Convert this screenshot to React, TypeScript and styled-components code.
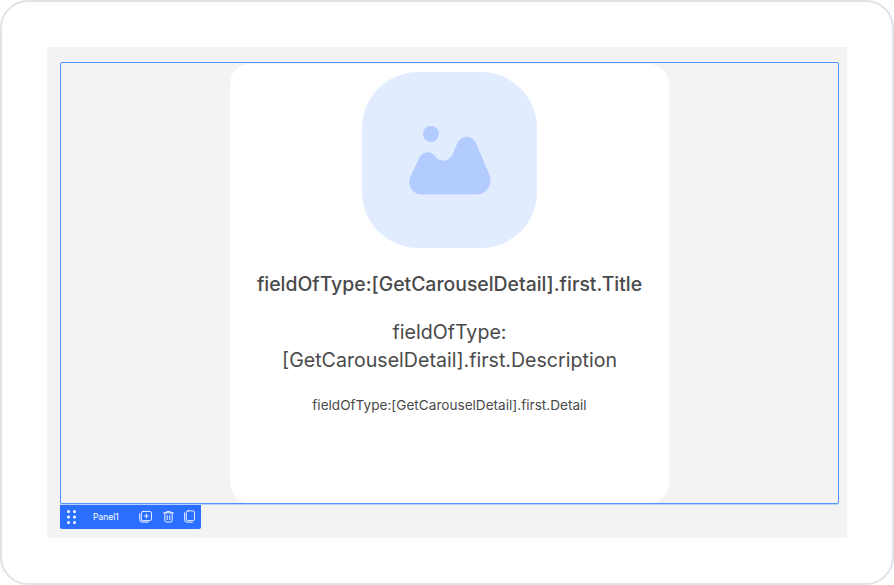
import React from "react";
import styled, { createGlobalStyle } from "styled-components";

const GlobalStyle = createGlobalStyle`
  html, body {
    margin: 0;
    padding: 0;
    background: #ffffff;
  }
  * {
    box-sizing: border-box;
  }
`;

const Frame = styled.div`
  width: 894px;
  height: 585px;
  padding: 45px 46px 45px 45px;
  background: #ffffff;
  border: 2px solid #e0e3e8;
  border-radius: 28px;
  font-family: Inter, "Liberation Sans", sans-serif;
`;

const Canvas = styled.div`
  width: 800px;
  height: 491px;
  padding: 15px 7px 0 13px;
  background: #f3f3f3;
`;

const Panel = styled.div`
  width: 779px;
  height: 442px;
  display: flex;
  justify-content: center;
  padding-top: 1px;
  border: 1px solid #4d94ff;
  border-radius: 2px;
  box-shadow: 0 1px 0 rgba(77, 148, 255, 0.35);
`;

const Card = styled.div`
  width: 439px;
  height: 439px;
  display: flex;
  flex-direction: column;
  align-items: center;
  padding-top: 8px;
  background: #ffffff;
  border-radius: 20px;
  color: #4a4a4a;
  text-align: center;
`;

const ImageTile = styled.div`
  width: 175.5px;
  height: 176px;
  display: flex;
  align-items: center;
  justify-content: center;
  background: #e2ecff;
  border-radius: 56px;
`;

const Title = styled.div`
  margin-top: 23px;
  font-size: 19.4px;
  line-height: 26px;
  font-weight: 500;
`;

const Description = styled.div`
  margin-top: 21px;
  width: 400px;
  font-size: 19.6px;
  line-height: 28px;
  font-weight: 400;
`;

const Detail = styled.div`
  margin-top: 21px;
  font-size: 13.6px;
  line-height: 20px;
  font-weight: 400;
`;

const Toolbar = styled.div`
  width: 141px;
  height: 24px;
  margin-top: 1px;
  display: flex;
  align-items: center;
  padding: 0 5px 1px 7px;
  background: #2a6fff;
  border-radius: 0 0 2px 2px;
  color: #ffffff;
`;

const PanelName = styled.span`
  margin-left: 16px;
  width: 46px;
  font-size: 8.5px;
  line-height: 12px;
`;

const ToolIcons = styled.div`
  display: flex;
  align-items: center;
  gap: 10.5px;
`;

const Grip = () => (
  <svg width="10" height="14" viewBox="0 0 10 14" fill="#ffffff">
    {[1.5, 7, 12.5].flatMap((y) =>
      [1.5, 7.5].map((x) => <circle key={`${x}-${y}`} cx={x} cy={y} r="1.5" />)
    )}
  </svg>
);

const AddIcon = () => (
  <svg width="13" height="13" viewBox="0 0 14 14" fill="none" stroke="#ffffff" strokeWidth="1" strokeLinecap="round">
    <rect x="2.5" y="1.5" width="11" height="10" rx="2" />
    <path d="M0.8 4v6.5a2.5 2.5 0 0 0 2.5 2.5H10" />
    <path d="M8 4.5v4M6 6.5h4" />
  </svg>
);

const TrashIcon = () => (
  <svg width="11" height="13" viewBox="0 0 12 14" fill="none" stroke="#ffffff" strokeWidth="1" strokeLinecap="round">
    <path d="M0.7 3h10.6M4 3V1.6h4V3" />
    <path d="M2 3v8.6A1.6 1.6 0 0 0 3.6 13h4.8A1.6 1.6 0 0 0 10 11.6V3" />
    <path d="M4.6 5.8v4.6M7.4 5.8v4.6" />
  </svg>
);

const CopyIcon = () => (
  <svg width="11" height="13" viewBox="0 0 12 14" fill="none" stroke="#ffffff" strokeWidth="1" strokeLinecap="round">
    <rect x="2.5" y="0.8" width="9" height="10.8" rx="2" />
    <path d="M0.7 3v7.8a2.4 2.4 0 0 0 2.4 2.4h6" />
  </svg>
);

const PictureIcon = () => (
  <svg width="82" height="69" viewBox="0 0 82 69" fill="#b3ccff">
    <circle cx="22" cy="8" r="8" />
    <path d="M1.3 51 L10.5 31.5 C13.5 25 22 24.5 26 30 C30 35.5 38 37 43 29.5 L48 18 C52 8.5 63 8.5 67 17 L80.5 49 C84 58 78 68.5 68 68.5 H13 C3 68.5 -2.5 59 1.3 51 Z" />
  </svg>
);

export default function App() {
  return (
    <>
      <GlobalStyle />
      <Frame>
        <Canvas>
          <Panel>
            <Card>
              <ImageTile>
                <PictureIcon />
              </ImageTile>
              <Title>fieldOfType:[GetCarouselDetail].first.Title</Title>
              <Description>fieldOfType:<br />[GetCarouselDetail].first.Description</Description>
              <Detail>fieldOfType:[GetCarouselDetail].first.Detail</Detail>
            </Card>
          </Panel>
          <Toolbar>
            <Grip />
            <PanelName>Panel1</PanelName>
            <ToolIcons>
              <AddIcon />
              <TrashIcon />
              <CopyIcon />
            </ToolIcons>
          </Toolbar>
        </Canvas>
      </Frame>
    </>
  );
}
